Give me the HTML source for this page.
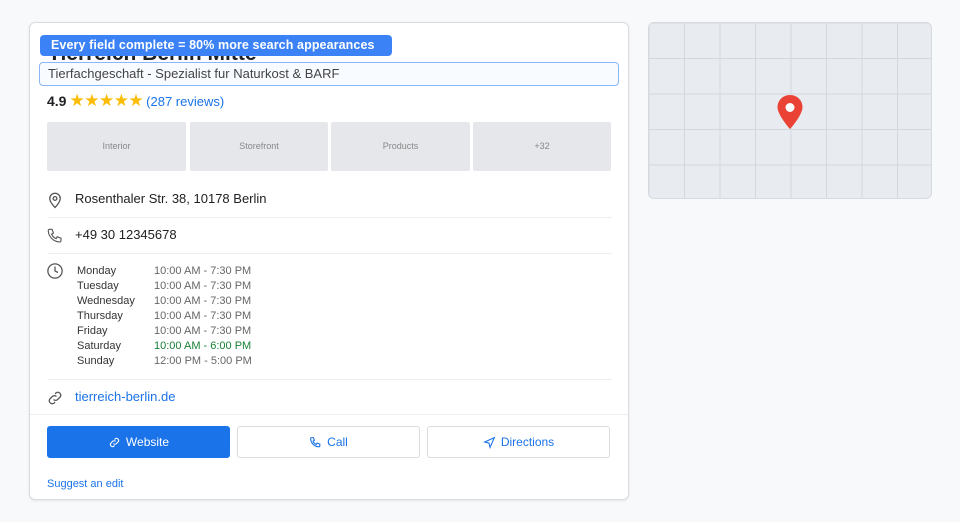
<!DOCTYPE html>
<html><head><style>
*{box-sizing:border-box;margin:0;padding:0}
body{width:960px;height:522px;background:#f8f9fa;font-family:"Liberation Sans",Arial,sans-serif;position:relative;overflow:hidden;color:#202124}
.card{position:absolute;left:29px;top:22px;width:600px;height:478px;background:#fff;border:1px solid #dadce0;border-radius:6px;box-shadow:0 1px 2px rgba(0,0,0,.08);overflow:hidden}
.abs{position:absolute}
.title{left:18px;top:19px;font-size:21px;font-weight:bold;color:#202124;white-space:nowrap}
.badge{left:10px;top:12px;height:21px;width:352px;background:#3b82f6;color:#fff;font-weight:bold;font-size:12.5px;line-height:21px;padding-left:11px;border-radius:4px;white-space:nowrap;letter-spacing:.1px}
.inp{left:9px;top:39px;width:580px;height:24px;border:1.5px solid #8ab4f8;border-radius:4px;background:#f8fbff;font-size:13px;color:#444;line-height:21px;padding-left:8px}
.rate{left:17px;top:70px;font-size:14px;line-height:16px;white-space:nowrap}
.stars{color:#fbbc04;font-size:17px;letter-spacing:-.5px;margin-left:3px}
.rate a{color:#1a73e8;font-size:13px;margin-left:3px}
.ph{top:99px;height:49px;background:#e5e7eb;border-radius:2px;font-size:9px;color:#888;text-align:center;line-height:49px}
.sep{left:18px;width:564px;height:1px;background:#eceef1}
.row{left:45px;font-size:13px}
.ic{left:16px}
.hours{left:47px;top:241px;font-size:11px;line-height:15px}
.hours td{padding:0}
.hours td:first-child{width:77px;color:#333}
.hours td:last-child{color:#666}
.btn{top:403px;height:32px;width:183px;border:1px solid #dadce0;border-radius:3px;font-size:12px;color:#1a73e8;display:flex;align-items:center;justify-content:center;gap:5px}
.map{position:absolute;left:648px;top:22px;width:284px;height:177px;border:1px solid #d6d9de;border-radius:6px;background-color:#e8ebf0;overflow:hidden;
background-image:linear-gradient(to right,#d3d8df 1px,transparent 1px),linear-gradient(to bottom,#d3d8df 1px,transparent 1px);background-size:35.5px 35.5px;background-position:-0.5px -0.5px}
</style></head><body>
<div class="card">
<div class="abs title">Tierreich Berlin Mitte</div>
<div class="abs badge">Every field complete = 80% more search appearances</div>
<div class="abs inp">Tierfachgeschaft - Spezialist fur Naturkost &amp; BARF</div>
<div class="abs rate"><b>4.9</b><span class="stars">★★★★★</span><a>(287 reviews)</a></div>
<div class="abs ph" style="left:17px;width:139px">Interior</div>
<div class="abs ph" style="left:160px;width:138px">Storefront</div>
<div class="abs ph" style="left:301px;width:139px">Products</div>
<div class="abs ph" style="left:443px;width:138px">+32</div>

<svg class="abs ic" style="top:168px" width="18" height="18" viewBox="0 0 24 24" fill="none" stroke="#555" stroke-width="1.7"><path d="M12 22s7-7 7-12a7 7 0 0 0-14 0c0 5 7 12 7 12z"/><circle cx="12" cy="10" r="2.5"/></svg>
<div class="abs row" style="top:168px">Rosenthaler Str. 38, 10178 Berlin</div>
<div class="abs sep" style="top:194px"></div>
<svg class="abs ic" style="top:204px" width="18" height="18" viewBox="0 0 24 24" fill="none" stroke="#555" stroke-width="1.5"><path d="M5 3h3l2 5-2.5 1.5a11 11 0 0 0 6 6L15 13l5 2v3a2 2 0 0 1-2 2A16 16 0 0 1 3 5a2 2 0 0 1 2-2z"/></svg>
<div class="abs row" style="top:204px">+49 30 12345678</div>
<div class="abs sep" style="top:230px"></div>
<svg class="abs ic" style="top:239px" width="18" height="18" viewBox="0 0 24 24" fill="none" stroke="#555" stroke-width="1.7"><circle cx="12" cy="12" r="9.5"/><path d="M12 6v6l4 2"/></svg>
<table class="abs hours" cellspacing="0">
<tr><td>Monday</td><td>10:00 AM - 7:30 PM</td></tr>
<tr><td>Tuesday</td><td>10:00 AM - 7:30 PM</td></tr>
<tr><td>Wednesday</td><td>10:00 AM - 7:30 PM</td></tr>
<tr><td>Thursday</td><td>10:00 AM - 7:30 PM</td></tr>
<tr><td>Friday</td><td>10:00 AM - 7:30 PM</td></tr>
<tr><td>Saturday</td><td style="color:#188038">10:00 AM - 6:00 PM</td></tr>
<tr><td>Sunday</td><td>12:00 PM - 5:00 PM</td></tr>
</table>
<div class="abs sep" style="top:356px"></div>
<svg class="abs ic" style="top:366px" width="18" height="18" viewBox="0 0 24 24" fill="none" stroke="#555" stroke-width="1.7"><path d="M10 14a4 4 0 0 0 5.5 0l3.5-3.5a4 4 0 0 0-5.5-5.5L12 6.5"/><path d="M14 10a4 4 0 0 0-5.5 0L5 13.5a4 4 0 0 0 5.5 5.5L12 17.5"/></svg>
<div class="abs row" style="top:366px;color:#1a73e8">tierreich-berlin.de</div>
<div class="abs sep" style="top:391px;left:0;width:600px"></div>

<div class="abs btn" style="left:17px;background:#1a73e8;border-color:#1a73e8;color:#fff"><svg width="13" height="13" viewBox="0 0 24 24" fill="none" stroke="#fff" stroke-width="2"><path d="M10 14a4 4 0 0 0 5.5 0l3.5-3.5a4 4 0 0 0-5.5-5.5L12 6.5"/><path d="M14 10a4 4 0 0 0-5.5 0L5 13.5a4 4 0 0 0 5.5 5.5L12 17.5"/></svg>Website</div>
<div class="abs btn" style="left:207px"><svg width="13" height="13" viewBox="0 0 24 24" fill="none" stroke="#1a73e8" stroke-width="2"><path d="M5 3h3l2 5-2.5 1.5a11 11 0 0 0 6 6L15 13l5 2v3a2 2 0 0 1-2 2A16 16 0 0 1 3 5a2 2 0 0 1 2-2z"/></svg>Call</div>
<div class="abs btn" style="left:397px"><svg width="13" height="13" viewBox="0 0 24 24" fill="none" stroke="#1a73e8" stroke-width="2"><path d="M21 3L3 11l8 2 2 8z"/></svg>Directions</div>
<div class="abs" style="left:17px;top:455px;font-size:11px;color:#1a73e8">Suggest an edit</div>
</div>

<div class="map">
<svg style="position:absolute;left:127px;top:71px" width="28" height="36" viewBox="0 0 28 36"><path d="M14 1C6.8 1 1.5 6.5 1.5 13.2 1.5 21 14 35 14 35s12.5-14 12.5-21.8C26.5 6.5 21.2 1 14 1z" fill="#ea4335"/><circle cx="14" cy="13.5" r="4.5" fill="#fff"/></svg>
</div>
</body></html>
